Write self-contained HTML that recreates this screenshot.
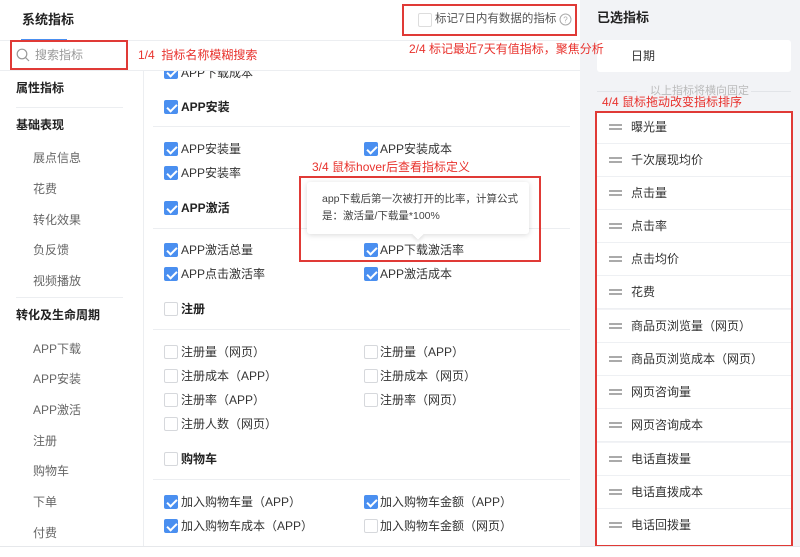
<!DOCTYPE html>
<html><head><meta charset="utf-8"><style>
*{margin:0;padding:0;box-sizing:border-box}
body{width:800px;height:557px;position:relative;overflow:hidden;background:#fff;font-family:"Liberation Sans","Noto Sans CJK SC",sans-serif;color:#333;font-size:12px}
.a{position:absolute;white-space:nowrap;line-height:14px}
.b{font-weight:bold;color:#222}
.g{color:#666}
.r{color:#e8322d;font-size:12px}
.cb{position:absolute;width:14px;height:14px;border-radius:2px;border:1px solid #d6d8dc;background:#fff}
.cb.on{background:#4a8ff0;border-color:#4a8ff0}
.cb.on:after{content:"";position:absolute;left:4px;top:1px;width:4px;height:8px;border:solid #fff;border-width:0 2px 2px 0;transform:rotate(45deg)}
.hl{position:absolute;height:1px;background:#eceef1}
.box{position:absolute;border:2px solid #e03a36}
.it{position:absolute;left:597px;width:194px;height:33px;background:#fff;border-bottom:1px solid #eef0f3}
.it i{position:absolute;left:12px;top:13px;width:13px;height:6px;border-top:2px solid #aaa;border-bottom:2px solid #aaa}
.it span{position:absolute;left:34px;top:9px;font-size:12px;color:#333;line-height:14px}
</style></head><body>
<!-- right panel -->
<div style="position:absolute;left:580px;top:0;width:220px;height:547px;background:#f2f3f6"></div>
<div class="a b" style="left:597px;top:11px;font-size:13px">已选指标</div>
<div style="position:absolute;left:597px;top:40px;width:194px;height:32px;background:#fff;border-radius:3px"></div>
<div class="a" style="left:631px;top:49px;font-size:12px">日期</div>
<div class="hl" style="left:597px;top:91px;width:40px;background:#e2e4e8"></div>
<div class="hl" style="left:751px;top:91px;width:40px;background:#e2e4e8"></div>
<div class="a" style="left:650px;top:84px;font-size:11px;color:#bbb">以上指标将横向固定</div>
<div class="a r" style="left:602px;top:95px">4/4 鼠标拖动改变指标排序</div>
<div class="it" style="top:111px"><i></i><span>曝光量</span></div>
<div class="it" style="top:144px"><i></i><span>千次展现均价</span></div>
<div class="it" style="top:177px"><i></i><span>点击量</span></div>
<div class="it" style="top:210px"><i></i><span>点击率</span></div>
<div class="it" style="top:243px"><i></i><span>点击均价</span></div>
<div class="it" style="top:276px"><i></i><span>花费</span></div>
<div class="it" style="top:310px"><i></i><span>商品页浏览量（网页）</span></div>
<div class="it" style="top:343px"><i></i><span>商品页浏览成本（网页）</span></div>
<div class="it" style="top:376px"><i></i><span>网页咨询量</span></div>
<div class="it" style="top:409px"><i></i><span>网页咨询成本</span></div>
<div class="it" style="top:443px"><i></i><span>电话直拨量</span></div>
<div class="it" style="top:476px"><i></i><span>电话直拨成本</span></div>
<div class="it" style="top:509px;height:37px"><i></i><span>电话回拨量</span></div>
<div class="box" style="left:595px;top:111px;width:198px;height:436px"></div>

<!-- header -->
<div class="a b" style="left:22px;top:13px;font-size:13px">系统指标</div>
<div style="position:absolute;left:21px;top:39px;width:46px;height:2px;background:#4a8ff0"></div>
<div class="hl" style="left:0;top:40px;width:580px"></div>
<div class="hl" style="left:0;top:70px;width:580px"></div>
<div style="position:absolute;left:143px;top:70px;width:1px;height:477px;background:#eceef1"></div>
<div class="hl" style="left:0;top:546px;width:800px;background:#e6e8eb"></div>

<!-- search -->
<div class="box" style="left:10px;top:40px;width:118px;height:30px"></div>
<svg style="position:absolute;left:16px;top:48px" width="14" height="14" viewBox="0 0 14 14"><circle cx="6" cy="6" r="4.8" fill="none" stroke="#999" stroke-width="1.2"/><path d="M9.5 9.5L13 13" stroke="#999" stroke-width="1.2"/></svg>
<div class="a" style="left:35px;top:48px;font-size:12px;color:#999">搜索指标</div>
<div class="a r" style="left:138px;top:48px">1/4 &nbsp;指标名称模糊搜索</div>

<!-- top right checkbox -->
<div class="box" style="left:402px;top:4px;width:175px;height:32px"></div>
<div class="cb" style="left:418px;top:13px;border-color:#ddd"></div>
<div class="a" style="left:435px;top:12px;font-size:11.5px;color:#555">标记7日内有数据的指标</div>
<svg style="position:absolute;left:559px;top:13px" width="13" height="13" viewBox="0 0 13 13"><circle cx="6.5" cy="6.5" r="5.5" fill="none" stroke="#aaa"/><text x="6.5" y="9.5" font-size="8" text-anchor="middle" fill="#aaa" font-family="Liberation Sans">?</text></svg>
<div class="a r" style="left:409px;top:42px">2/4 标记最近7天有值指标，聚焦分析</div>

<!-- sidebar -->
<div class="a b" style="left:16px;top:81px;font-size:12px">属性指标</div>
<div class="hl" style="left:16px;top:107px;width:107px"></div>
<div class="a b" style="left:16px;top:118px;font-size:12px">基础表现</div>
<div class="a g" style="left:33px;top:151px">展点信息</div>
<div class="a g" style="left:33px;top:182px">花费</div>
<div class="a g" style="left:33px;top:213px">转化效果</div>
<div class="a g" style="left:33px;top:243px">负反馈</div>
<div class="a g" style="left:33px;top:274px">视频播放</div>
<div class="hl" style="left:16px;top:297px;width:107px"></div>
<div class="a b" style="left:16px;top:308px">转化及生命周期</div>
<div class="a g" style="left:33px;top:342px">APP下载</div>
<div class="a g" style="left:33px;top:372px">APP安装</div>
<div class="a g" style="left:33px;top:403px">APP激活</div>
<div class="a g" style="left:33px;top:434px">注册</div>
<div class="a g" style="left:33px;top:464px">购物车</div>
<div class="a g" style="left:33px;top:495px">下单</div>
<div class="a g" style="left:33px;top:526px">付费</div>

<!-- content -->
<div style="position:absolute;left:144px;top:71px;width:436px;height:475px;overflow:hidden">
<div class="cb on" style="left:20px;top:-6px"></div><div class="a" style="left:37px;top:-5px;font-size:12px">APP下载成本</div>
</div>
<div class="cb on" style="left:164px;top:100px"></div><div class="a b" style="left:181px;top:100px">APP安装</div>
<div class="hl" style="left:153px;top:126px;width:417px"></div>
<div class="cb on" style="left:164px;top:142px"></div><div class="a" style="left:181px;top:142px">APP安装量</div>
<div class="cb on" style="left:364px;top:142px"></div><div class="a" style="left:380px;top:142px">APP安装成本</div>
<div class="cb on" style="left:164px;top:166px"></div><div class="a" style="left:181px;top:166px">APP安装率</div>
<div class="cb on" style="left:164px;top:201px"></div><div class="a b" style="left:181px;top:201px">APP激活</div>
<div class="hl" style="left:153px;top:228px;width:417px"></div>
<div class="cb on" style="left:164px;top:243px"></div><div class="a" style="left:181px;top:243px">APP激活总量</div>
<div class="cb on" style="left:364px;top:243px"></div><div class="a" style="left:380px;top:243px">APP下载激活率</div>
<div class="cb on" style="left:164px;top:267px"></div><div class="a" style="left:181px;top:267px">APP点击激活率</div>
<div class="cb on" style="left:364px;top:267px"></div><div class="a" style="left:380px;top:267px">APP激活成本</div>
<div class="cb" style="left:164px;top:302px"></div><div class="a b" style="left:181px;top:302px">注册</div>
<div class="hl" style="left:153px;top:329px;width:417px"></div>
<div class="cb" style="left:164px;top:345px"></div><div class="a" style="left:181px;top:345px">注册量（网页）</div>
<div class="cb" style="left:364px;top:345px"></div><div class="a" style="left:380px;top:345px">注册量（APP）</div>
<div class="cb" style="left:164px;top:369px"></div><div class="a" style="left:181px;top:369px">注册成本（APP）</div>
<div class="cb" style="left:364px;top:369px"></div><div class="a" style="left:380px;top:369px">注册成本（网页）</div>
<div class="cb" style="left:164px;top:393px"></div><div class="a" style="left:181px;top:393px">注册率（APP）</div>
<div class="cb" style="left:364px;top:393px"></div><div class="a" style="left:380px;top:393px">注册率（网页）</div>
<div class="cb" style="left:164px;top:417px"></div><div class="a" style="left:181px;top:417px">注册人数（网页）</div>
<div class="cb" style="left:164px;top:452px"></div><div class="a b" style="left:181px;top:452px">购物车</div>
<div class="hl" style="left:153px;top:479px;width:417px"></div>
<div class="cb on" style="left:164px;top:495px"></div><div class="a" style="left:181px;top:495px">加入购物车量（APP）</div>
<div class="cb on" style="left:364px;top:495px"></div><div class="a" style="left:380px;top:495px">加入购物车金额（APP）</div>
<div class="cb on" style="left:164px;top:519px"></div><div class="a" style="left:181px;top:519px">加入购物车成本（APP）</div>
<div class="cb" style="left:364px;top:519px"></div><div class="a" style="left:380px;top:519px">加入购物车金额（网页）</div>

<!-- tooltip -->
<div class="a r" style="left:312px;top:160px">3/4 鼠标hover后查看指标定义</div>
<div style="position:absolute;left:307px;top:182px;width:222px;height:52px;background:#fff;border-radius:3px;box-shadow:0 1px 6px rgba(0,0,0,0.15)"></div>
<div style="position:absolute;left:414px;top:230px;width:8px;height:8px;background:#fff;transform:rotate(45deg);box-shadow:2px 2px 3px rgba(0,0,0,0.08)"></div>
<div class="a" style="left:322px;top:192px;font-size:10.5px;color:#444">app下载后第一次被打开的比率，计算公式</div>
<div class="a" style="left:322px;top:209px;font-size:10.5px;color:#444">是：激活量/下载量*100%</div>
<div class="box" style="left:299px;top:176px;width:242px;height:86px"></div>
</body></html>
